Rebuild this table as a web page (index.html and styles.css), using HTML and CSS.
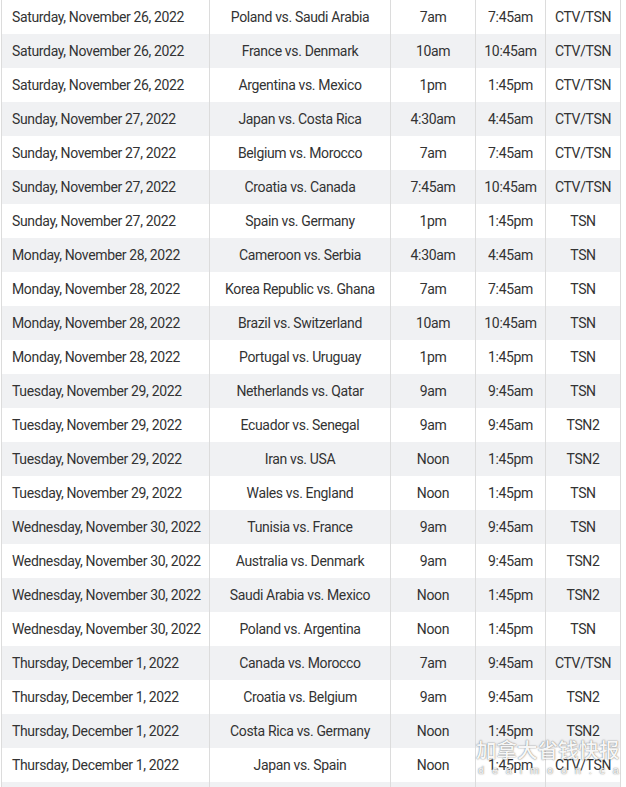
FILE: index.html
```html
<!DOCTYPE html>
<html>
<head>
<meta charset="utf-8">
<link rel="stylesheet" href="styles.css">
</head>
<body>
<table class="schedule">
<colgroup><col class="c-date"><col class="c-match"><col class="c-t1"><col class="c-t2"><col class="c-ch"></colgroup>
<tbody>
<tr><td>Saturday, November 26, 2022</td><td>Poland vs. Saudi Arabia</td><td>7am</td><td>7:45am</td><td>CTV/TSN</td></tr>
<tr><td>Saturday, November 26, 2022</td><td>France vs. Denmark</td><td>10am</td><td>10:45am</td><td>CTV/TSN</td></tr>
<tr><td>Saturday, November 26, 2022</td><td>Argentina vs. Mexico</td><td>1pm</td><td>1:45pm</td><td>CTV/TSN</td></tr>
<tr><td>Sunday, November 27, 2022</td><td>Japan vs. Costa Rica</td><td>4:30am</td><td>4:45am</td><td>CTV/TSN</td></tr>
<tr><td>Sunday, November 27, 2022</td><td>Belgium vs. Morocco</td><td>7am</td><td>7:45am</td><td>CTV/TSN</td></tr>
<tr><td>Sunday, November 27, 2022</td><td>Croatia vs. Canada</td><td>7:45am</td><td>10:45am</td><td>CTV/TSN</td></tr>
<tr><td>Sunday, November 27, 2022</td><td>Spain vs. Germany</td><td>1pm</td><td>1:45pm</td><td>TSN</td></tr>
<tr><td>Monday, November 28, 2022</td><td>Cameroon vs. Serbia</td><td>4:30am</td><td>4:45am</td><td>TSN</td></tr>
<tr><td>Monday, November 28, 2022</td><td>Korea Republic vs. Ghana</td><td>7am</td><td>7:45am</td><td>TSN</td></tr>
<tr><td>Monday, November 28, 2022</td><td>Brazil vs. Switzerland</td><td>10am</td><td>10:45am</td><td>TSN</td></tr>
<tr><td>Monday, November 28, 2022</td><td>Portugal vs. Uruguay</td><td>1pm</td><td>1:45pm</td><td>TSN</td></tr>
<tr><td>Tuesday, November 29, 2022</td><td>Netherlands vs. Qatar</td><td>9am</td><td>9:45am</td><td>TSN</td></tr>
<tr><td>Tuesday, November 29, 2022</td><td>Ecuador vs. Senegal</td><td>9am</td><td>9:45am</td><td>TSN2</td></tr>
<tr><td>Tuesday, November 29, 2022</td><td>Iran vs. USA</td><td>Noon</td><td>1:45pm</td><td>TSN2</td></tr>
<tr><td>Tuesday, November 29, 2022</td><td>Wales vs. England</td><td>Noon</td><td>1:45pm</td><td>TSN</td></tr>
<tr><td>Wednesday, November 30, 2022</td><td>Tunisia vs. France</td><td>9am</td><td>9:45am</td><td>TSN</td></tr>
<tr><td>Wednesday, November 30, 2022</td><td>Australia vs. Denmark</td><td>9am</td><td>9:45am</td><td>TSN2</td></tr>
<tr><td>Wednesday, November 30, 2022</td><td>Saudi Arabia vs. Mexico</td><td>Noon</td><td>1:45pm</td><td>TSN2</td></tr>
<tr><td>Wednesday, November 30, 2022</td><td>Poland vs. Argentina</td><td>Noon</td><td>1:45pm</td><td>TSN</td></tr>
<tr><td>Thursday, December 1, 2022</td><td>Canada vs. Morocco</td><td>7am</td><td>9:45am</td><td>CTV/TSN</td></tr>
<tr><td>Thursday, December 1, 2022</td><td>Croatia vs. Belgium</td><td>9am</td><td>9:45am</td><td>TSN2</td></tr>
<tr><td>Thursday, December 1, 2022</td><td>Costa Rica vs. Germany</td><td>Noon</td><td>1:45pm</td><td>TSN2</td></tr>
<tr><td>Thursday, December 1, 2022</td><td>Japan vs. Spain</td><td>Noon</td><td>1:45pm</td><td>CTV/TSN</td></tr>
<tr><td></td><td></td><td></td><td></td><td></td></tr>
</tbody>
</table>
<div class="watermark">
  <div class="wm-cn">加拿大省钱快报</div>
  <div class="wm-en">dealmoon.ca</div>
</div>
</body>
</html>
```
FILE: styles.css
```css
html, body {
  margin: 0;
  padding: 0;
  background: #ffffff;
  overflow: hidden;
}
body {
  width: 626px;
  height: 787px;
  position: relative;
  font-family: Roboto, "Liberation Sans", Arial, sans-serif;
  font-size: 14px;
  letter-spacing: -0.35px;
  color: #333333;
}
.schedule {
  border-collapse: collapse;
  margin-left: 1px;
  table-layout: fixed;
  width: 620px;
}
.c-date { width: 208px; }
.c-match { width: 181px; }
.c-t1 { width: 85px; }
.c-t2 { width: 70px; }
.c-ch { width: 75px; }
.schedule td {
  height: 34px;
  padding: 1px 0 0 0;
  box-sizing: border-box;
  border-left: 1px solid #dcdcdc;
  border-right: 1px solid #dcdcdc;
  text-align: center;
  vertical-align: middle;
  white-space: nowrap;
  line-height: 33px;
}
.schedule td:first-child {
  text-align: left;
  padding-left: 10px;
}
.schedule tr:nth-child(even) td {
  background: #f0f1f3;
}
.watermark {
  position: absolute;
  left: 476px;
  top: 736px;
  width: 150px;
  letter-spacing: 0;
  color: rgba(255,255,255,0.95);
  text-shadow: 0 0 1px rgba(90,90,90,0.75), 0 0 2px rgba(90,90,90,0.45);
  font-family: "Noto Sans CJK SC", sans-serif;
}
.wm-cn {
  font-size: 20.5px;
  font-weight: 500;
  line-height: 26px;
}
.wm-en {
  font-family: "Liberation Sans", sans-serif;
  font-size: 11px;
  line-height: 14px;
  letter-spacing: 7.8px;
  margin-top: 1px;
  padding-left: 2px;
}
```
